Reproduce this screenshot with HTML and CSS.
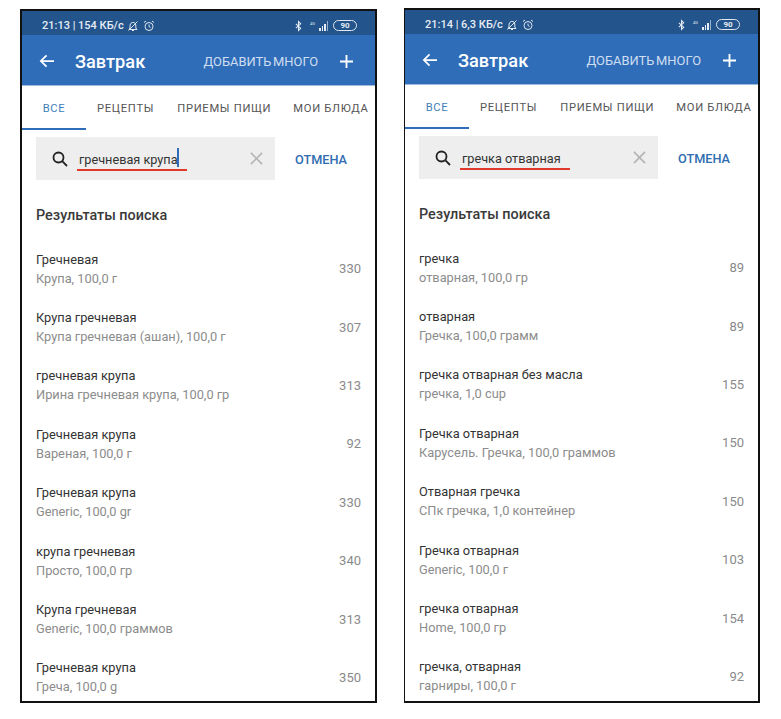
FILE: index.html
```html
<!DOCTYPE html>
<html lang="en">
<head>
    <meta charset="UTF-8">
    <title>Завтрак</title>
    <link rel="stylesheet" href="styles.css">
</head>
<body>
<div class="phone phone-left">
    <div class="status">
        <span class="status-text">21:13 | 154 КБ/с</span>
        <svg class="ic-bell" viewBox="0 0 12 12"><path d="M3 9.500h7L8.800 8V5A2.800 2.800 0 0 0 4 3.200L3 5v3L2 9.500M1.500 10.500 10.500 1.500M5 10.500h2"/></svg>
        <svg class="ic-alarm" viewBox="0 0 12 12"><circle cx="6" cy="6.500" r="4"/><path d="M6 4.500v2l1.500 1M1 2.500 3 1M11 2.500 9 1"/></svg>
        <span class="status-gap"></span>
        <svg class="ic-bt" viewBox="0 0 8 12"><path d="M1 3.500 6.500 8.500 4 11V1l2.500 2.500L1 8.500"/></svg>
        <span class="signal"><em>4G</em><i class="s1"></i><i class="s2"></i><i class="s3"></i><i class="s4"></i></span>
        <span class="battery">90</span>
    </div>
    <header class="bar">
        <svg class="ic-back" viewBox="0 0 18 16"><path d="M17 8H2M8.500 1.500 2 8l6.500 6.500"/></svg>
        <h1 class="bar-title">Завтрак</h1>
        <span class="bar-action">ДОБАВИТЬ МНОГО</span>
        <svg class="ic-plus" viewBox="0 0 14 14"><path d="M7 0v14M0 7h14"/></svg>
    </header>
    <nav class="tabs">
        <span class="tab tab-active">ВСЕ</span>
        <span class="tab tab-recipes">РЕЦЕПТЫ</span>
        <span class="tab tab-meals">ПРИЕМЫ ПИЩИ</span>
        <span class="tab tab-mine">МОИ БЛЮДА</span>
    </nav>
    <div class="search-row">
        <div class="search">
            <svg class="ic-search" viewBox="0 0 16 16"><circle cx="6.500" cy="6.500" r="5"/><path d="M10.200 10.200 15 15"/></svg>
            <span class="query query-left">гречневая крупа<i class="caret"></i></span>
            <svg class="ic-clear" viewBox="0 0 14 14"><path d="M1 1l12 12M13 1 1 13"/></svg>
        </div>
        <span class="cancel">ОТМЕНА</span>
    </div>
    <h2 class="results-title">Результаты поиска</h2>
    <ul class="results">
        <li><div><b>Гречневая</b><small>Крупа, 100,0 г</small></div><span>330</span></li>
        <li><div><b>Крупа гречневая</b><small>Крупа гречневая (ашан), 100,0 г</small></div><span>307</span></li>
        <li><div><b>гречневая крупа</b><small>Ирина гречневая крупа, 100,0 гр</small></div><span>313</span></li>
        <li><div><b>Гречневая крупа</b><small>Вареная, 100,0 г</small></div><span>92</span></li>
        <li><div><b>Гречневая крупа</b><small>Generic, 100,0 gr</small></div><span>330</span></li>
        <li><div><b>крупа гречневая</b><small>Просто, 100,0 гр</small></div><span>340</span></li>
        <li><div><b>Крупа гречневая</b><small>Generic, 100,0 граммов</small></div><span>313</span></li>
        <li><div><b>Гречневая крупа</b><small>Греча, 100,0 g</small></div><span>350</span></li>
    </ul>
</div>

<div class="phone phone-right">
    <div class="status">
        <span class="status-text">21:14 | 6,3 КБ/с</span>
        <svg class="ic-bell" viewBox="0 0 12 12"><path d="M3 9.500h7L8.800 8V5A2.800 2.800 0 0 0 4 3.200L3 5v3L2 9.500M1.500 10.500 10.500 1.500M5 10.500h2"/></svg>
        <svg class="ic-alarm" viewBox="0 0 12 12"><circle cx="6" cy="6.500" r="4"/><path d="M6 4.500v2l1.500 1M1 2.500 3 1M11 2.500 9 1"/></svg>
        <span class="status-gap"></span>
        <svg class="ic-bt" viewBox="0 0 8 12"><path d="M1 3.500 6.500 8.500 4 11V1l2.500 2.500L1 8.500"/></svg>
        <span class="signal"><em>4G</em><i class="s1"></i><i class="s2"></i><i class="s3"></i><i class="s4"></i></span>
        <span class="battery">90</span>
    </div>
    <header class="bar">
        <svg class="ic-back" viewBox="0 0 18 16"><path d="M17 8H2M8.500 1.500 2 8l6.500 6.500"/></svg>
        <h1 class="bar-title">Завтрак</h1>
        <span class="bar-action">ДОБАВИТЬ МНОГО</span>
        <svg class="ic-plus" viewBox="0 0 14 14"><path d="M7 0v14M0 7h14"/></svg>
    </header>
    <nav class="tabs">
        <span class="tab tab-active">ВСЕ</span>
        <span class="tab tab-recipes">РЕЦЕПТЫ</span>
        <span class="tab tab-meals">ПРИЕМЫ ПИЩИ</span>
        <span class="tab tab-mine">МОИ БЛЮДА</span>
    </nav>
    <div class="search-row">
        <div class="search">
            <svg class="ic-search" viewBox="0 0 16 16"><circle cx="6.500" cy="6.500" r="5"/><path d="M10.200 10.200 15 15"/></svg>
            <span class="query query-right">гречка отварная</span>
            <svg class="ic-clear" viewBox="0 0 14 14"><path d="M1 1l12 12M13 1 1 13"/></svg>
        </div>
        <span class="cancel">ОТМЕНА</span>
    </div>
    <h2 class="results-title">Результаты поиска</h2>
    <ul class="results">
        <li><div><b>гречка</b><small>отварная, 100,0 гр</small></div><span>89</span></li>
        <li><div><b>отварная</b><small>Гречка, 100,0 грамм</small></div><span>89</span></li>
        <li><div><b>гречка отварная без масла</b><small>гречка, 1,0 cup</small></div><span>155</span></li>
        <li><div><b>Гречка отварная</b><small>Карусель. Гречка, 100,0 граммов</small></div><span>150</span></li>
        <li><div><b>Отварная гречка</b><small>СПк гречка, 1,0 контейнер</small></div><span>150</span></li>
        <li><div><b>Гречка отварная</b><small>Generic, 100,0 г</small></div><span>103</span></li>
        <li><div><b>гречка отварная</b><small>Home, 100,0 гр</small></div><span>154</span></li>
        <li><div><b>гречка, отварная</b><small>гарниры, 100,0 г</small></div><span>92</span></li>
    </ul>
</div>
</body>
</html>
```
FILE: styles.css
```css
html, body {
    height: 100%;
}

body {
    margin: 0;
    background: white;
    font-family: Roboto, "Noto Sans", sans-serif;
    display: flex;
    align-items: flex-start;
    gap: 27px;
    padding-left: 20px;
    overflow: hidden;
}

.phone {
    width: 353px;
    height: 690px;
    border: 2px solid #111;
    background: white;
    overflow: hidden;
    flex-shrink: 0;
}

.phone-left {
    margin-top: 9px;
}

.phone-right {
    margin-top: 8px;
    height: 691px;
    border-left-width: 1px;
}

/* status bar */
.status {
    height: 19px;
    background: #24548c;
    color: #e6edf5;
    display: flex;
    align-items: center;
    padding: 5px 18px 0 20px;
}

.status-text {
    font-size: 11px;
    font-weight: 500;
}

.status-gap {
    flex: 1;
}

.ic-bell,
.ic-alarm {
    width: 12px;
    height: 12px;
    fill: none;
    stroke: #dfe7f0;
    stroke-width: 1;
}

.ic-bell {
    margin-left: 3px;
}

.ic-alarm {
    margin-left: 4px;
}

.ic-bt {
    width: 7px;
    height: 12px;
    margin-right: 8px;
    fill: none;
    stroke: #e6edf5;
    stroke-width: 1.200;
}

.signal {
    display: flex;
    align-items: flex-end;
    gap: 1px;
    height: 10px;
    margin-right: 5px;
}

.signal em {
    font-size: 4px;
    line-height: 5px;
    font-style: normal;
    align-self: flex-start;
    margin-right: 1px;
    width: 7px;
    color: #dfe7f0;
}

.signal i {
    display: block;
    width: 1.500px;
    background: #e6edf5;
}

.signal .s1 { height: 3px; }
.signal .s2 { height: 5px; }
.signal .s3 { height: 7px; }
.signal .s4 { height: 10px; opacity: .6; }

.battery {
    width: 22px;
    height: 9px;
    border: 1px solid #dfe7f0;
    border-radius: 6px;
    font-size: 8px;
    font-weight: 700;
    line-height: 9px;
    text-align: center;
    color: #e6edf5;
}

/* app bar */
.bar {
    height: 48px;
    background: #2f6db9;
    border-bottom: 1px solid #9dbbdf;
    display: flex;
    align-items: center;
    color: white;
    padding: 2px 22px 0 17px;
}

.ic-back {
    width: 16px;
    height: 14px;
    fill: none;
    stroke: white;
    stroke-width: 2;
}

.bar-title {
    margin: 0 0 0 20px;
    font-size: 18.200px;
    font-weight: 500;
    flex: 1;
}

.bar-action {
    font-size: 12.900px;
    color: #cfdef0;
    margin-right: 22px;
    word-spacing: -1.500px;
}

.ic-plus {
    width: 13px;
    height: 13px;
    fill: none;
    stroke: white;
    stroke-width: 2;
}

/* tabs */
.tabs {
    height: 44px;
    display: flex;
    align-items: center;
    font-size: 11.200px;
    letter-spacing: .7px;
    color: #555;
    white-space: nowrap;
}

.tab {
    flex-shrink: 0;
}

.tab-active {
    color: #3f7fb9;
    width: 64px;
    height: 44px;
    line-height: 46px;
    box-sizing: border-box;
    border-bottom: 2px solid #2f6db9;
    text-align: center;
}

.tab-recipes {
    margin-left: 11px;
}

.tab-meals {
    margin-left: 23px;
}

.tab-mine {
    margin-left: 22px;
}

/* search */
.search-row {
    display: flex;
    align-items: center;
    padding: 7px 0 0 14px;
}

.search {
    width: 239px;
    height: 43px;
    background: #eeeeee;
    display: flex;
    align-items: center;
    padding-left: 16px;
    box-sizing: border-box;
}

.ic-search {
    width: 16px;
    height: 16px;
    flex-shrink: 0;
    fill: none;
    stroke: #222;
    stroke-width: 1.800;
}

.query {
    margin-left: 11px;
    font-size: 12.700px;
    color: #333;
    height: 20px;
    line-height: 22px;
    width: 171px;
    position: relative;
}

.query-left::after,
.query-right::after {
    content: "";
    position: absolute;
    left: -2px;
    top: 20px;
    height: 2px;
    background: #e0382a;
}

.query-left::after {
    width: 110px;
}

.query-right::after {
    width: 110px;
}

.caret {
    position: absolute;
    left: 98px;
    top: -1px;
    width: 2px;
    height: 19px;
    background: #2f6db9;
}

.ic-clear {
    width: 13px;
    height: 13px;
    fill: none;
    stroke: #b3b3b3;
    stroke-width: 1.700;
}

.cancel {
    margin-left: 20px;
    padding-top: 2px;
    font-size: 12.700px;
    font-weight: 500;
    color: #2f6db0;
}

/* results */
.results-title {
    margin: 27px 0 0 14px;
    font-size: 14.400px;
    line-height: 18px;
    font-weight: 500;
    color: #3a3a3a;
}

.results {
    list-style: none;
    margin: 14.500px 0 0;
    padding: 0 14px;
}

.results li {
    height: 58.400px;
    display: flex;
    align-items: center;
    justify-content: space-between;
}

.results b {
    display: block;
    font-size: 12.800px;
    font-weight: 400;
    line-height: 19px;
    color: #333;
}

.results small {
    display: block;
    font-size: 12.800px;
    line-height: 19px;
    color: #8c8c8c;
}

.results span {
    font-size: 13px;
    color: #8a8a8a;
}
```
